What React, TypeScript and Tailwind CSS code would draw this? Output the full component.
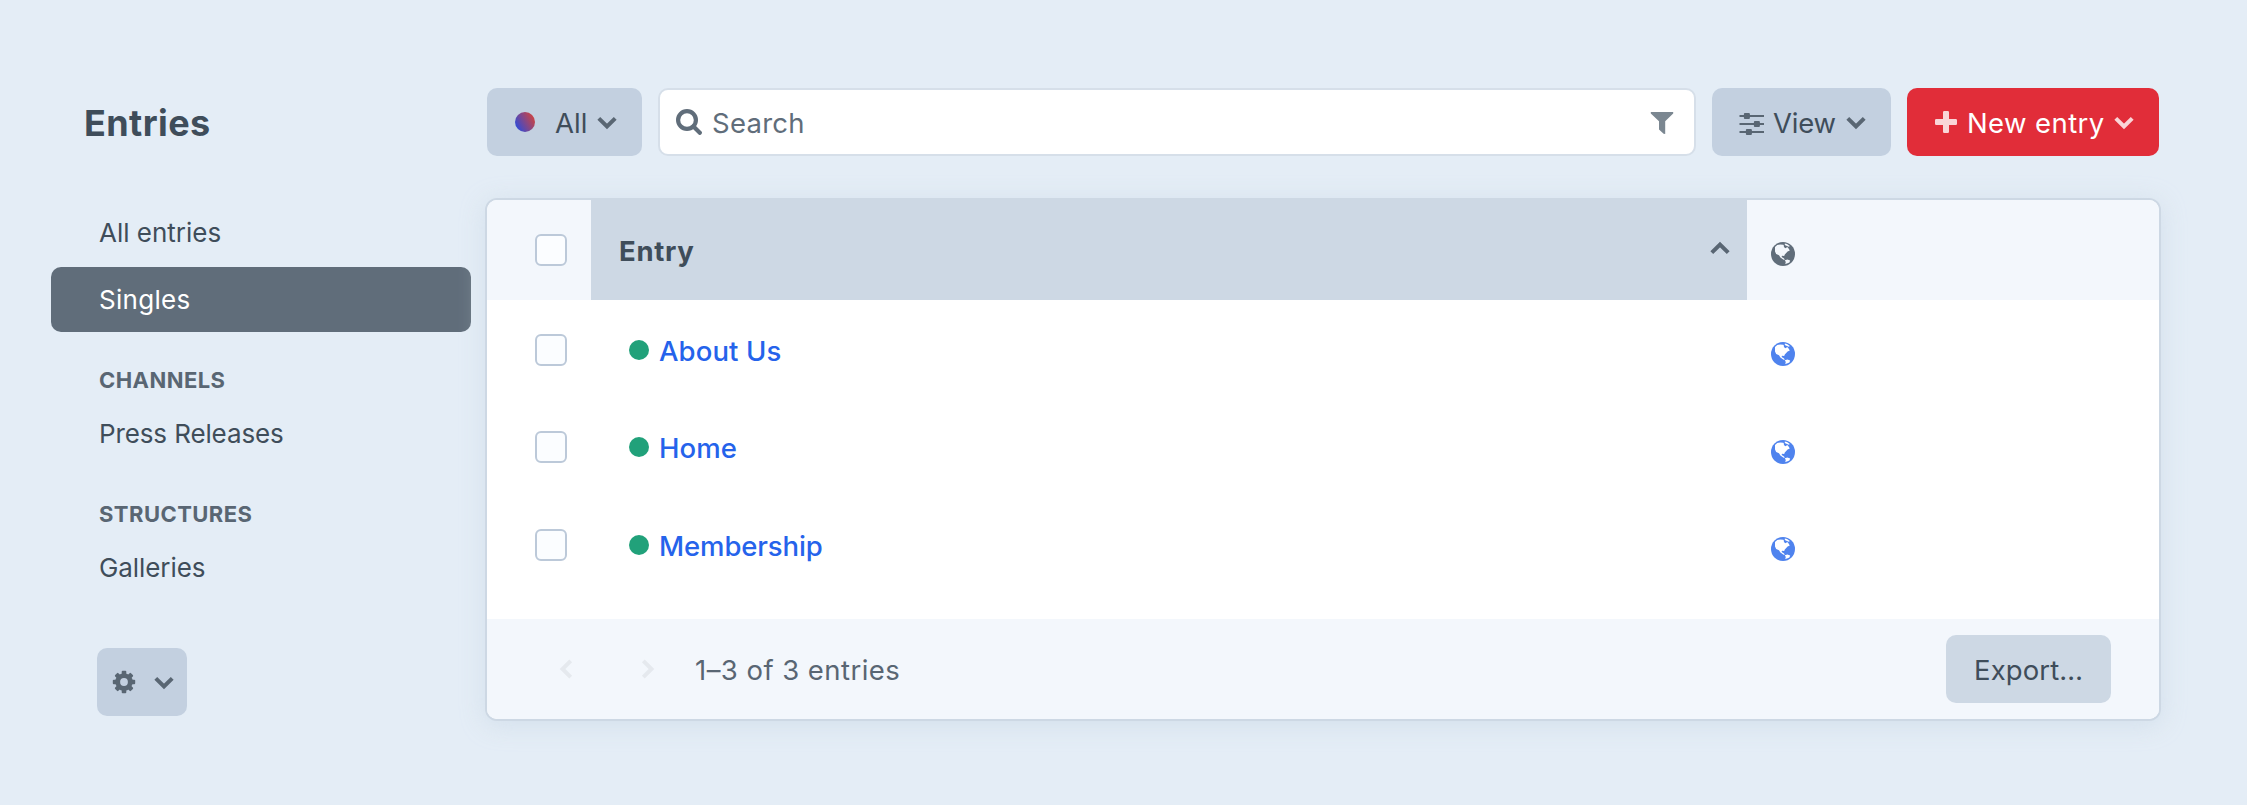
import React from "react";

const chevronRotation = {
  down: "",
  up: "rotate-180",
  left: "rotate-90",
  right: "-rotate-90",
};

function Chevron({ dir = "down", className = "" }: { dir?: keyof typeof chevronRotation; className?: string }) {
  return (
    <svg viewBox="0 0 20 20" className={`size-5 shrink-0 ${chevronRotation[dir]} ${className}`} fill="none" stroke="currentColor" strokeWidth="4">
      <path d="M1.8 5.3 L10 13.5 L18.2 5.3" />
    </svg>
  );
}

function Gear() {
  return (
    <svg viewBox="-12 -12 24 24" className="size-6 shrink-0" fill="currentColor">
      {[0, 45, 90, 135].map((a) => (
        <rect key={a} x="-2.3" y="-11.2" width="4.6" height="22.4" rx="1" transform={`rotate(${a})`} />
      ))}
      <circle r="8.7" />
      <circle r="3.9" className="fill-[#c3d0e0]" />
    </svg>
  );
}

function SearchIcon() {
  return (
    <svg viewBox="0 0 26 26" className="size-[26px] shrink-0" fill="none" stroke="currentColor">
      <circle cx="11" cy="11" r="8.9" strokeWidth="4.2" />
      <path d="M17.5 17.5 L23.8 23.8" strokeWidth="4.2" strokeLinecap="round" />
    </svg>
  );
}

function FilterIcon() {
  return (
    <svg viewBox="0 0 24 24" className="size-6 shrink-0" fill="currentColor">
      <path d="M0.8 1 H23.2 V2.6 L15.2 10.2 V23 L13.6 22.8 L9 18.6 V10.2 L0.8 2.6 Z" />
    </svg>
  );
}

function SlidersIcon() {
  return (
    <svg viewBox="0 0 26 24" className="h-6 w-[26px] shrink-0" fill="currentColor">
      <path d="M0.5 3h24.5v2H0.5zM0.5 11h24.5v2H0.5zM0.5 19h24.5v2H0.5z" />
      <rect x="4.9" y="1" width="6" height="6" rx="1" />
      <rect x="14.9" y="9" width="6" height="6" rx="1" />
      <rect x="6.9" y="17" width="6" height="6" rx="1" />
    </svg>
  );
}

function Plus() {
  return (
    <svg viewBox="0 0 22 22" className="size-[22px] shrink-0" fill="currentColor">
      <path d="M9.2 0h3.6a1.2 1.2 0 0 1 1.2 1.2V8h6.8a1.2 1.2 0 0 1 1.2 1.2v3.6a1.2 1.2 0 0 1-1.2 1.2H14v6.8a1.2 1.2 0 0 1-1.2 1.2H9.2A1.2 1.2 0 0 1 8 20.8V14H1.2A1.2 1.2 0 0 1 0 12.8V9.2A1.2 1.2 0 0 1 1.2 8H8V1.2A1.2 1.2 0 0 1 9.2 0z" />
    </svg>
  );
}

function Globe({ land, className }: { land: string; className: string }) {
  return (
    <svg viewBox="0 0 24 24" className={`size-6 shrink-0 ${className}`}>
      <circle cx="12" cy="12" r="12" fill="currentColor" />
      <g className={land}>
        <path d="M4 5 L6.2 3 L9 2.6 L12.4 2.8 L13 4 L12.8 5 L14.6 6.2 L16.2 5 L17.6 6.4 L18.8 8.6 L16.6 9.6 L15.2 11 L13.8 12.4 L13.2 14 L11 13.8 L10.6 15 L12.4 16 L14 17.4 L12.6 17.8 L9.4 15.6 L8 13.2 L5.2 12 L4 9.4 Z" />
        <path d="M13.8 1.6 L16 2 L18.8 4 L17.8 4.8 L15.4 3.8 L13.8 3 Z" />
        <path d="M13.8 18.2 L16.4 17.4 L19.2 18.6 L18.4 20.4 L16 21.6 L14.2 22 L14.8 20 Z" />
      </g>
    </svg>
  );
}

function Checkbox() {
  return <span className="box-border size-8 shrink-0 rounded-[6px] border-2 border-[#bcc9d9] bg-[#fbfdff]" />;
}

const heading = "ml-[48px] flex h-[42px] items-center text-[22px] font-bold tracking-[0.45px] text-[#596673]";
const navItem = "flex h-[65px] items-center rounded-[10px] pl-[48px] text-[26px]";
const toolButton = "flex h-[68px] shrink-0 items-center rounded-[10px]";

export default function App() {
  return (
    <div className="flex h-[805px] w-[2247px] overflow-hidden whitespace-nowrap bg-[#e4edf6] pl-[51px] pt-[88px] font-['Inter',sans-serif] leading-none text-[#3f4d5a]">
      <aside className="w-[420px] shrink-0">
        <h1 className="flex h-[68px] items-center pl-[33px] pt-[1px] text-[36px] font-bold tracking-[0.4px]">Entries</h1>
        <nav className="mt-[44px]">
          <div className={navItem}>All entries</div>
          <div className={`${navItem} mt-[2px] bg-[#606d7a] tracking-[0.3px] text-white`}>Singles</div>
          <div className={`${heading} mt-[27px]`}>CHANNELS</div>
          <div className={`${navItem} tracking-[-0.12px]`}>Press Releases</div>
          <div className={`${heading} mt-[27px]`}>STRUCTURES</div>
          <div className={`${navItem} tracking-[-0.08px]`}>Galleries</div>
        </nav>
        <button className={`${toolButton} ml-[46px] mt-[48px] w-[90px] bg-[#c3d0e0] pl-[15px] text-[#596673]`}>
          <Gear />
          <Chevron className="ml-[18px] mt-[2px]" />
        </button>
      </aside>

      <main className="ml-[14px] w-[1676px] shrink-0">
        <div className="flex gap-4 pl-[2px] pr-[2px] text-[27.5px]">
          <button className={`${toolButton} w-[155px] bg-[#c3d0e0] pl-[28px]`}>
            <span className="size-5 rounded-full bg-[linear-gradient(60deg,#184cef,#e5422b)]" />
            <span className="ml-[20px] w-[42px] pt-[3px] text-left">All</span>
            <Chevron className="mt-[2px] text-[#596673]" />
          </button>
          <div className="flex h-[68px] grow items-center rounded-[10px] border-2 border-[#d6dfe9] bg-white pl-[16px] pr-[20px] text-[#606d7a]">
            <SearchIcon />
            <span className="ml-[10px] grow pt-[3px] tracking-[0.25px]">Search</span>
            <span className="flex pt-[2px] text-[#7b8791]">
              <FilterIcon />
            </span>
          </div>
          <button className={`${toolButton} w-[179px] bg-[#c3d0e0] pl-[27px]`}>
            <span className="flex pt-[3px] text-[#596673]">
              <SlidersIcon />
            </span>
            <span className="ml-[8px] w-[73px] pt-[3px] text-left tracking-[-0.2px]">View</span>
            <Chevron className="mt-[2px] text-[#596673]" />
          </button>
          <button className={`${toolButton} w-[252px] bg-[#e12d39] pl-[28px] text-white`}>
            <span className="flex text-[#f9d5d7]">
              <Plus />
            </span>
            <span className="ml-[10px] w-[147px] pt-[3px] text-left tracking-[0.4px]">New entry</span>
            <Chevron className="mt-[2px] text-[#f9d5d7]" />
          </button>
        </div>

        <section className="mt-[42px] h-[523px] overflow-hidden rounded-[12px] border-2 border-[#cdd8e4] bg-white text-[27.5px] shadow-[0_4px_24px_rgba(205,219,232,0.75)]">
          <div className="flex h-[100px] bg-[#f3f7fc]">
            <div className="flex w-[104px] items-center pl-[48px]">
              <Checkbox />
            </div>
            <div className="flex w-[1156px] items-center justify-between bg-[#cdd8e4] pl-[28px] pr-[17px]">
              <span className="pt-[3px] font-bold tracking-[0.7px]">Entry</span>
              <Chevron dir="up" className="-mt-[5px] text-[#596673]" />
            </div>
            <div className="flex items-center pl-[24px] pt-[8px]">
              <Globe className="text-[#606d7a]" land="fill-[#f3f7fc]" />
            </div>
          </div>
          <div className="h-[319px] pt-[1px]">
            {[
              { name: "About Us", tracking: "tracking-[0.1px]" },
              { name: "Home", tracking: "tracking-[0.1px]" },
              { name: "Membership", tracking: "tracking-[-0.1px]" },
            ].map((row) => (
              <div key={row.name} className="flex h-[97.5px]">
                <div className="flex w-[104px] items-center pl-[48px]">
                  <Checkbox />
                </div>
                <div className="flex w-[1156px] items-center pl-[38px]">
                  <span className="size-5 rounded-full bg-[#21a17a]" />
                  <a className={`ml-[10px] pt-[3px] font-medium text-[#2563eb] ${row.tracking}`}>{row.name}</a>
                </div>
                <div className="flex items-center pl-[24px] pt-[9px]">
                  <Globe className="text-[#4f83ee]" land="fill-white" />
                </div>
              </div>
            ))}
          </div>
          <div className="flex h-[100px] items-center bg-[#f3f7fc] pl-[69px] pr-[48px]">
            <Chevron dir="left" className="text-[#e5e9ee]" />
            <Chevron dir="right" className="ml-[62px] text-[#e5e9ee]" />
            <span className="ml-[37px] grow pt-[3px] tracking-[0.45px] text-[#596673]">1–3 of 3 entries</span>
            <button className={`${toolButton} w-[165px] bg-[#cdd8e4] pl-[28px] pt-[3px] tracking-[0.1px]`}>Export…</button>
          </div>
        </section>
      </main>
    </div>
  );
}
